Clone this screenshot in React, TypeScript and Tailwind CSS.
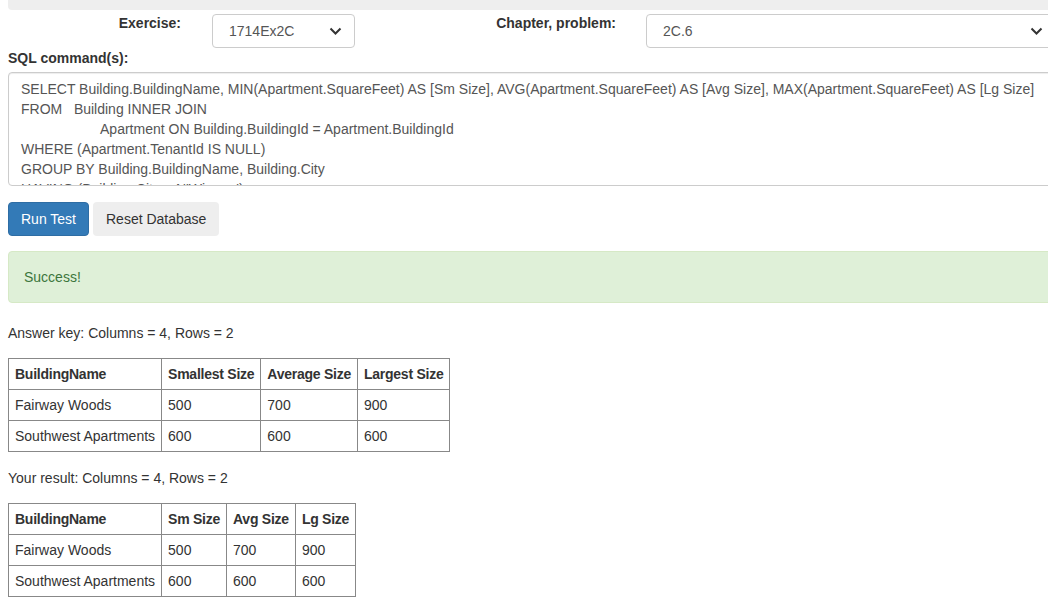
const SQL_LINES = [
  'SELECT Building.BuildingName, MIN(Apartment.SquareFeet) AS [Sm Size], AVG(Apartment.SquareFeet) AS [Avg Size], MAX(Apartment.SquareFeet) AS [Lg Size]',
  'FROM   Building INNER JOIN',
  '                    Apartment ON Building.BuildingId = Apartment.BuildingId',
  'WHERE (Apartment.TenantId IS NULL)',
  'GROUP BY Building.BuildingName, Building.City',
  "HAVING (Building.City = N'Winona')",
];

const answerKey = {
  cols: ['BuildingName', 'Smallest Size', 'Average Size', 'Largest Size'],
  rows: [
    ['Fairway Woods', '500', '700', '900'],
    ['Southwest Apartments', '600', '600', '600'],
  ],
};

const yourResult = {
  cols: ['BuildingName', 'Sm Size', 'Avg Size', 'Lg Size'],
  rows: [
    ['Fairway Woods', '500', '700', '900'],
    ['Southwest Apartments', '600', '600', '600'],
  ],
};

function Chevron() {
  return (
    <svg width="13" height="8" viewBox="0 0 13 8" className="shrink-0">
      <path d="M1.5 1.5l5 5 5-5" fill="none" stroke="#333" strokeWidth="2" />
    </svg>
  );
}

function Select({ value, className }: { value: string; className: string }) {
  return (
    <div
      className={`h-[34px] flex items-center justify-between pl-[16px] pr-[12px] border border-[#ccc] rounded-[4px] bg-white text-[14px] text-[#555] ${className}`}
    >
      <span>{value}</span>
      <Chevron />
    </div>
  );
}

function ResultTable({ cols, rows }: { cols: string[]; rows: string[][] }) {
  return (
    <table className="border-collapse text-[14px] leading-[20px] text-[#333]">
      <thead>
        <tr>
          {cols.map((c) => (
            <th
              key={c}
              className="border border-[#888] px-[6px] py-[5px] text-left font-bold tracking-[-0.25px] whitespace-nowrap"
            >
              {c}
            </th>
          ))}
        </tr>
      </thead>
      <tbody>
        {rows.map((r, i) => (
          <tr key={i}>
            {r.map((v, j) => (
              <td key={j} className="border border-[#888] px-[6px] py-[5px] whitespace-nowrap">
                {v}
              </td>
            ))}
          </tr>
        ))}
      </tbody>
    </table>
  );
}

export default function App() {
  return (
    <div className="w-[1048px] h-[609px] overflow-hidden bg-white font-['Liberation_Sans',Arial,sans-serif] text-[14px] leading-[20px] text-[#333]">
      <div className="w-[1070px]">
        {/* panel heading, scrolled mostly off the top */}
        <div className="ml-2 h-[10px] bg-[#eee] rounded-bl-[4px] overflow-hidden">
          <div className="-mt-[25px] pl-[20px] text-[22px] leading-[26px] font-bold text-[#333] whitespace-nowrap">
            SQL Query Test Application
          </div>
        </div>

        <div className="flex items-start">
          <div className="w-[181px] mt-[3px] text-right font-bold">Exercise:</div>
          <Select value="1714Ex2C" className="ml-[31px] mt-[4px] w-[143px]" />
          <div className="w-[261px] mt-[3px] text-right font-bold">Chapter, problem:</div>
          <Select value="2C.6" className="ml-[30px] mt-[4px] w-[410px]" />
        </div>

        <div className="pl-2">
          <div className="mb-[4px] font-bold">SQL command(s):</div>
          <div className="h-[114px] border border-[#ccc] rounded-[4px] pl-[12px] pt-[6px] overflow-hidden text-[#555] whitespace-pre shadow-[inset_0_1px_1px_rgba(0,0,0,0.075)]">
            {SQL_LINES.map((l, i) => (
              <div key={i} className={i === 2 ? 'pl-[2px]' : ''}>
                {l}
              </div>
            ))}
          </div>

          <div className="mt-[16px] flex gap-[4px]">
            <button className="h-[34px] px-[12px] rounded-[4px] bg-[#337ab7] border border-[#2e6da4] text-white">
              Run Test
            </button>
            <button className="h-[34px] px-[13px] rounded-[4px] bg-[#eeeeee] text-[#333]">Reset Database</button>
          </div>

          <div className="mt-[15px] h-[52px] px-[15px] flex items-center border border-[#d6e9c6] rounded-[4px] bg-[#dff0d8] text-[#3c763d] w-[1062px]">
            Success!
          </div>

          <div className="mt-[20px]">Answer key: Columns = 4, Rows = 2</div>
          <div className="mt-[15px]">
            <ResultTable cols={answerKey.cols} rows={answerKey.rows} />
          </div>

          <div className="mt-[16px]">Your result: Columns = 4, Rows = 2</div>
          <div className="mt-[15px]">
            <ResultTable cols={yourResult.cols} rows={yourResult.rows} />
          </div>
        </div>
      </div>
    </div>
  );
}
